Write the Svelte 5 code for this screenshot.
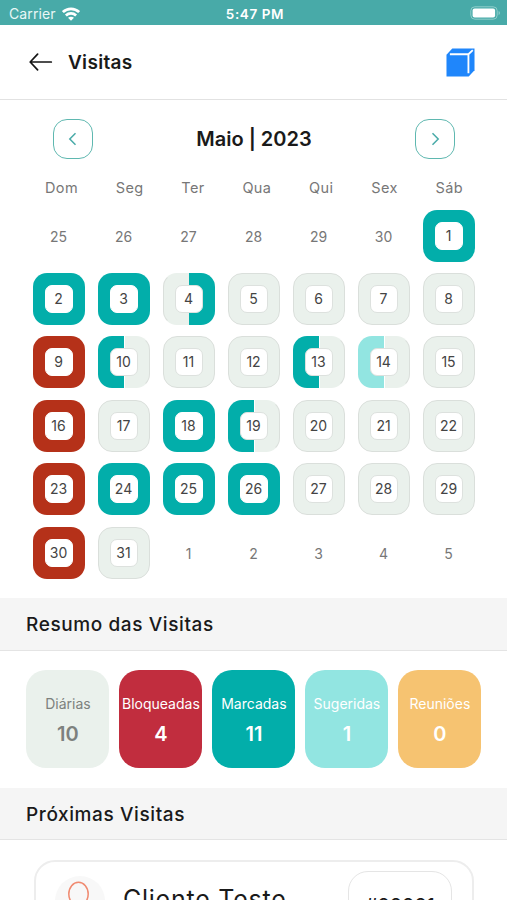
<script>
	const weekdays = ['Dom', 'Seg', 'Ter', 'Qua', 'Qui', 'Sex', 'Sáb'];

	// left / right half of each day: free, booked, blocked, suggested
	const special = {
		1: ['booked', 'booked'],
		2: ['booked', 'booked'],
		3: ['booked', 'booked'],
		4: ['free', 'booked'],
		9: ['blocked', 'blocked'],
		10: ['booked', 'free'],
		13: ['booked', 'free'],
		14: ['suggested', 'free'],
		16: ['blocked', 'blocked'],
		18: ['booked', 'booked'],
		19: ['booked', 'free'],
		23: ['blocked', 'blocked'],
		24: ['booked', 'booked'],
		25: ['booked', 'booked'],
		26: ['booked', 'booked'],
		30: ['blocked', 'blocked']
	};

	const range = (from, to) => Array.from({ length: to - from + 1 }, (_, i) => from + i);

	const days = [
		...range(25, 30).map((n) => ({ n, outside: true })),
		...range(1, 31).map((n) => ({ n, halves: special[n] || ['free', 'free'] })),
		...range(1, 5).map((n) => ({ n, outside: true }))
	];

	const summary = [
		{ label: 'Diárias', value: 10, type: 'daily' },
		{ label: 'Bloqueadas', value: 4, type: 'locked' },
		{ label: 'Marcadas', value: 11, type: 'marked' },
		{ label: 'Sugeridas', value: 1, type: 'hinted' },
		{ label: 'Reuniões', value: 0, type: 'meeting' }
	];
</script>

<div class="screen">
	<div class="status-bar">
		<div class="carrier">
			<span>Carrier</span>
			<svg width="18" height="14" viewBox="0 0 18 14" fill="none" stroke="#fff" stroke-width="2.7">
				<path d="M0.9 5.1C5.4 0.7 12.6 0.7 17.1 5.1" />
				<path d="M3.9 8.5C6.8 5.7 11.2 5.7 14.1 8.5" />
				<path d="M9 13.8L6 10.8C7.8 9.3 10.2 9.3 12 10.8Z" fill="#fff" stroke="none" />
			</svg>
		</div>
		<span class="time">5:47 PM</span>
		<svg class="battery" width="31" height="14" viewBox="0 0 31 14">
			<rect x="0.8" y="0.8" width="26.4" height="12.4" rx="4" fill="none" stroke="#8fcdca" />
			<rect x="2.6" y="2.5" width="22.5" height="9" rx="2" fill="#fff" />
			<path d="M28.6 5V9C30.4 8.3 30.4 5.7 28.6 5Z" fill="#8fcdca" />
		</svg>
	</div>

	<header>
		<svg width="24" height="18" viewBox="0 0 24 18" fill="none" stroke="#151515" stroke-width="1.7" stroke-linecap="round" stroke-linejoin="round">
			<path d="M22.3 9H1.2M8.6 1.2L1.2 9L8.6 16.8" />
		</svg>
		<h1>Visitas</h1>
		<svg width="29" height="29" viewBox="0 0 30 30">
			<path d="M0.5 7L6.5 0.5H29.5V23L23.5 29.5H0.5Z" fill="#1f86fb" />
			<path d="M4 6.5H23.2L27.7 2.2M23.2 6.5V26" fill="none" stroke="#fff" stroke-width="1.9" />
		</svg>
	</header>

	<section class="calendar">
		<div class="month">
			<button aria-label="Mês anterior">
				<svg width="9" height="14" viewBox="0 0 9 14"><path d="M7.5 1.3L1.8 7L7.5 12.7" /></svg>
			</button>
			<h2>Maio | 2023</h2>
			<button aria-label="Próximo mês">
				<svg width="9" height="14" viewBox="0 0 9 14"><path d="M1.5 1.3L7.2 7L1.5 12.7" /></svg>
			</button>
		</div>
		<div class="weekdays">
			{#each weekdays as day}
				<span>{day}</span>
			{/each}
		</div>
		<div class="days">
			{#each days as day}
				{#if day.outside}
					<div class="outside">{day.n}</div>
				{:else}
					<div class="day left-{day.halves[0]} right-{day.halves[1]}">
						<span>{day.n}</span>
					</div>
				{/if}
			{/each}
		</div>
	</section>

	<h3>Resumo das Visitas</h3>
	<section class="summary">
		{#each summary as item}
			<div class="summary-card {item.type}">
				<span>{item.label}</span>
				<strong>{item.value}</strong>
			</div>
		{/each}
	</section>

	<h3 class="next">Próximas Visitas</h3>
	<section class="visits">
		<div class="visit">
			<div class="avatar">
				<svg width="50" height="50" viewBox="0 0 50 50" fill="none" stroke="#f08a70" stroke-width="1.5">
					<ellipse cx="23.5" cy="18" rx="9.7" ry="11.8" />
					<path d="M8 45C9 35 16 32 24.5 32S40 35 41 45" />
				</svg>
			</div>
			<span class="client">Cliente Teste</span>
			<span class="code">#00001</span>
		</div>
	</section>
</div>

<style>
	:global(body) {
		margin: 0;
		overflow: hidden;
		background: #fff;
	}

	.screen {
		height: 900px;
		overflow: hidden;
		font-family: Inter, sans-serif;
		color: #1a1a1a;
		background: #fff;
	}

	h1, h2, h3 {
		margin: 0;
		font-weight: 500;
	}

	.status-bar {
		display: grid;
		grid-template-columns: 1fr auto 1fr;
		align-items: center;
		height: 25px;
		padding: 2px 6px 0 9px;
		box-sizing: border-box;
		background: #48aaa8;
		color: #fff;
	}

	.carrier {
		display: flex;
		align-items: center;
		gap: 6px;
		color: #e9f7f6;
		font-size: 14px;
		letter-spacing: 0.1px;
	}

	.time {
		font-size: 13.5px;
		font-weight: 600;
		letter-spacing: 0.6px;
	}

	.battery {
		justify-self: end;
		margin-bottom: 1px;
	}

	header {
		display: flex;
		align-items: center;
		height: 75px;
		padding: 0 32px 0 29px;
		box-sizing: border-box;
		border-bottom: 1px solid #e2e2e2;
	}

	h1 {
		flex: 1;
		margin-left: 15px;
		font-size: 19px;
		font-weight: 600;
		letter-spacing: 0.3px;
	}

	.calendar {
		height: 498px;
		padding-top: 19px;
		box-sizing: border-box;
	}

	.month {
		display: flex;
		align-items: center;
		justify-content: space-between;
		padding: 0 51.5px 0 52.5px;
	}

	.month button {
		display: flex;
		align-items: center;
		justify-content: center;
		width: 40px;
		height: 40px;
		padding: 0;
		border: 1px solid #5fb8b0;
		border-radius: 14px;
		background: #fff;
	}

	.month path {
		fill: none;
		stroke: #48aaa8;
		stroke-width: 1.5;
	}

	h2 {
		font-size: 20px;
		font-weight: 600;
	}

	.weekdays {
		display: flex;
		justify-content: space-between;
		height: 20px;
		margin-top: 19px;
		padding: 0 44px 0 45px;
		line-height: 20px;
		font-size: 14.5px;
		letter-spacing: 0.4px;
		color: #777;
	}

	.days {
		display: grid;
		grid-template-columns: repeat(7, 52px);
		grid-auto-rows: 52px;
		gap: 11.45px 13px;
		margin: 11.5px 0 0 32.5px;
	}

	.outside {
		display: flex;
		align-items: center;
		justify-content: center;
		padding-top: 2px;
		font-size: 14px;
		color: #777;
	}

	.day {
		--left: #eaf1ec;
		--right: #eaf1ec;
		display: flex;
		align-items: center;
		justify-content: center;
		border: 1px solid #dadfdb;
		border-radius: 14px;
		box-sizing: border-box;
		background: linear-gradient(90deg, var(--left) 50%, var(--right) 50%) border-box;
	}

	.day span {
		width: 28px;
		height: 28px;
		border: 1px solid #dde1de;
		border-radius: 7px;
		box-sizing: border-box;
		background: #fff;
		text-align: center;
		line-height: 26px;
		font-size: 14px;
		color: #444;
	}

	.left-booked { --left: #02aeaa; }
	.right-booked { --right: #02aeaa; }
	.left-blocked { --left: #b53119; }
	.right-blocked { --right: #b53119; }
	.left-suggested { --left: #92e5e1; }

	.right-booked,
	.right-blocked,
	.left-booked,
	.left-suggested {
		border-color: transparent;
	}

	.left-booked.right-booked span,
	.left-blocked.right-blocked span {
		border-color: #fff;
	}

	/* thin divider between the halves */
	.left-booked.right-free,
	.left-suggested.right-free {
		border-right-color: #dadfdb;
		background: linear-gradient(90deg, var(--left) 49.5%, #fff 49.5%, #fff 51.5%, var(--right) 51.5%) border-box;
	}

	.left-free.right-booked {
		border-left-color: #dadfdb;
	}

	h3 {
		height: 53px;
		padding-left: 26px;
		box-sizing: border-box;
		border-bottom: 1px solid #e4e4e4;
		background: #f5f5f5;
		line-height: 53px;
		font-size: 19px;
		letter-spacing: 0.6px;
	}

	.next {
		height: 52px;
	}

	.summary {
		display: grid;
		grid-template-columns: repeat(5, 83px);
		gap: 10px;
		padding: 19px 0 20px 26.4px;
	}

	.summary-card {
		display: flex;
		flex-direction: column;
		align-items: center;
		height: 98px;
		padding-top: 24px;
		box-sizing: border-box;
		border-radius: 20px;
		color: #fff;
	}

	.summary-card span {
		height: 20px;
		line-height: 19px;
		font-size: 14px;
	}

	.summary-card strong {
		margin-top: 8px;
		line-height: 24px;
		font-size: 20px;
		font-weight: 600;
	}

	.daily {
		background: #eaf1ec;
		color: #7d817e;
	}

	.locked { background: #c12d3e; }
	.marked { background: #02aeaa; }
	.hinted { background: #92e5e1; }
	.meeting { background: #f6c371; }

	.visits {
		padding: 20px 33px 0 34px;
	}

	.visit {
		display: flex;
		align-items: flex-start;
		height: 120px;
		padding: 9px 20px 0 19px;
		box-sizing: border-box;
		border: 2px solid #ededed;
		border-radius: 21px;
	}

	.avatar {
		width: 50px;
		height: 50px;
		margin-top: 5px;
		border-radius: 50%;
		background: #f8f8f8;
	}

	.client {
		flex: 1;
		margin: 13px 0 0 18px;
		line-height: 30px;
		font-size: 25px;
		letter-spacing: 0.75px;
	}

	.code {
		width: 104px;
		height: 68px;
		border: 1px solid #e5e5e5;
		border-radius: 20px;
		box-sizing: border-box;
		text-align: center;
		line-height: 68px;
		font-size: 19px;
		font-weight: 500;
	}
</style>
